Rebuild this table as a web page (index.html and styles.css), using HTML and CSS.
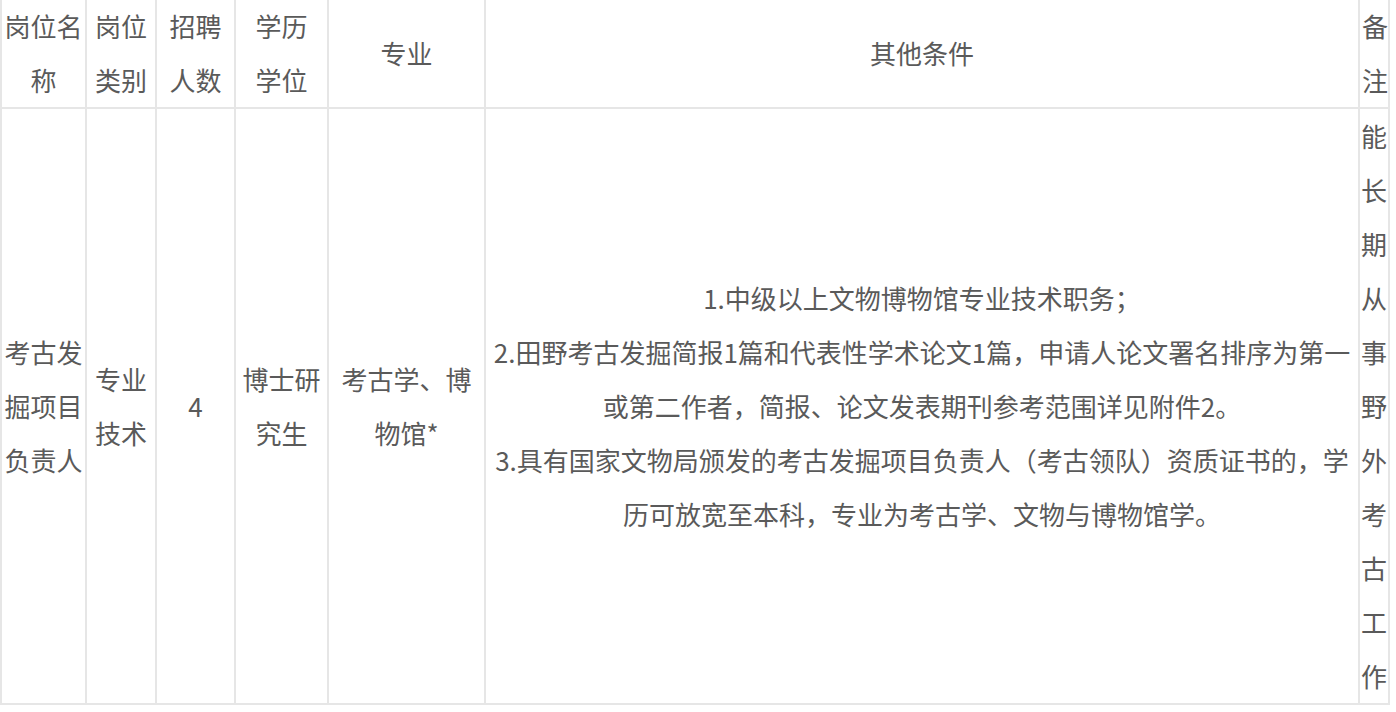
FILE: index.html
```html
<!DOCTYPE html>
<html lang="zh-CN">
<head>
<meta charset="utf-8">
<title>招聘岗位</title>
<link rel="stylesheet" href="styles.css">
</head>
<body>
<table class="jobs">
  <colgroup>
    <col class="c1"><col class="c2"><col class="c3"><col class="c4"><col class="c5"><col class="c6"><col class="c7">
  </colgroup>
  <thead>
    <tr>
      <th>岗位名称</th>
      <th>岗位类别</th>
      <th>招聘人数</th>
      <th>学历<br>学位</th>
      <th>专业</th>
      <th>其他条件</th>
      <th>备注</th>
    </tr>
  </thead>
  <tbody>
    <tr>
      <td>考古发掘项目负责人</td>
      <td>专业技术</td>
      <td>4</td>
      <td>博士研究生</td>
      <td>考古学、博物馆*</td>
      <td>1.中级以上文物博物馆专业技术职务；<br>2.田野考古发掘简报1篇和代表性学术论文1篇，申请人论文署名排序为第一或第二作者，简报、论文发表期刊参考范围详见附件2。<br>3.具有国家文物局颁发的考古发掘项目负责人（考古领队）资质证书的，学历可放宽至本科，专业为考古学、文物与博物馆学。</td>
      <td>能长期从事野外考古工作</td>
    </tr>
  </tbody>
</table>
</body>
</html>
```

FILE: styles.css
```css
html, body {
  margin: 0;
  padding: 0;
  background: #ffffff;
}

.jobs {
  margin-top: -3px;
  width: 1390px;
  table-layout: fixed;
  border-collapse: collapse;
  font-family: "Noto Sans CJK SC", "Noto Sans", sans-serif;
  font-size: 26px;
  line-height: 54px;
  color: #5a5a5a;
}

.jobs th,
.jobs td {
  border: 2px solid #e6e6e6;
  padding: 0 2px;
  text-align: center;
  vertical-align: middle;
  font-weight: normal;
  word-break: break-all;
}

.c1 { width: 85px; }
.c2 { width: 70px; }
.c3 { width: 79px; }
.c4 { width: 93px; }
.c5 { width: 157px; }
.c6 { width: 874px; }
.c7 { width: 30px; }

.jobs tbody td:last-child {
  padding: 0;
}
```
